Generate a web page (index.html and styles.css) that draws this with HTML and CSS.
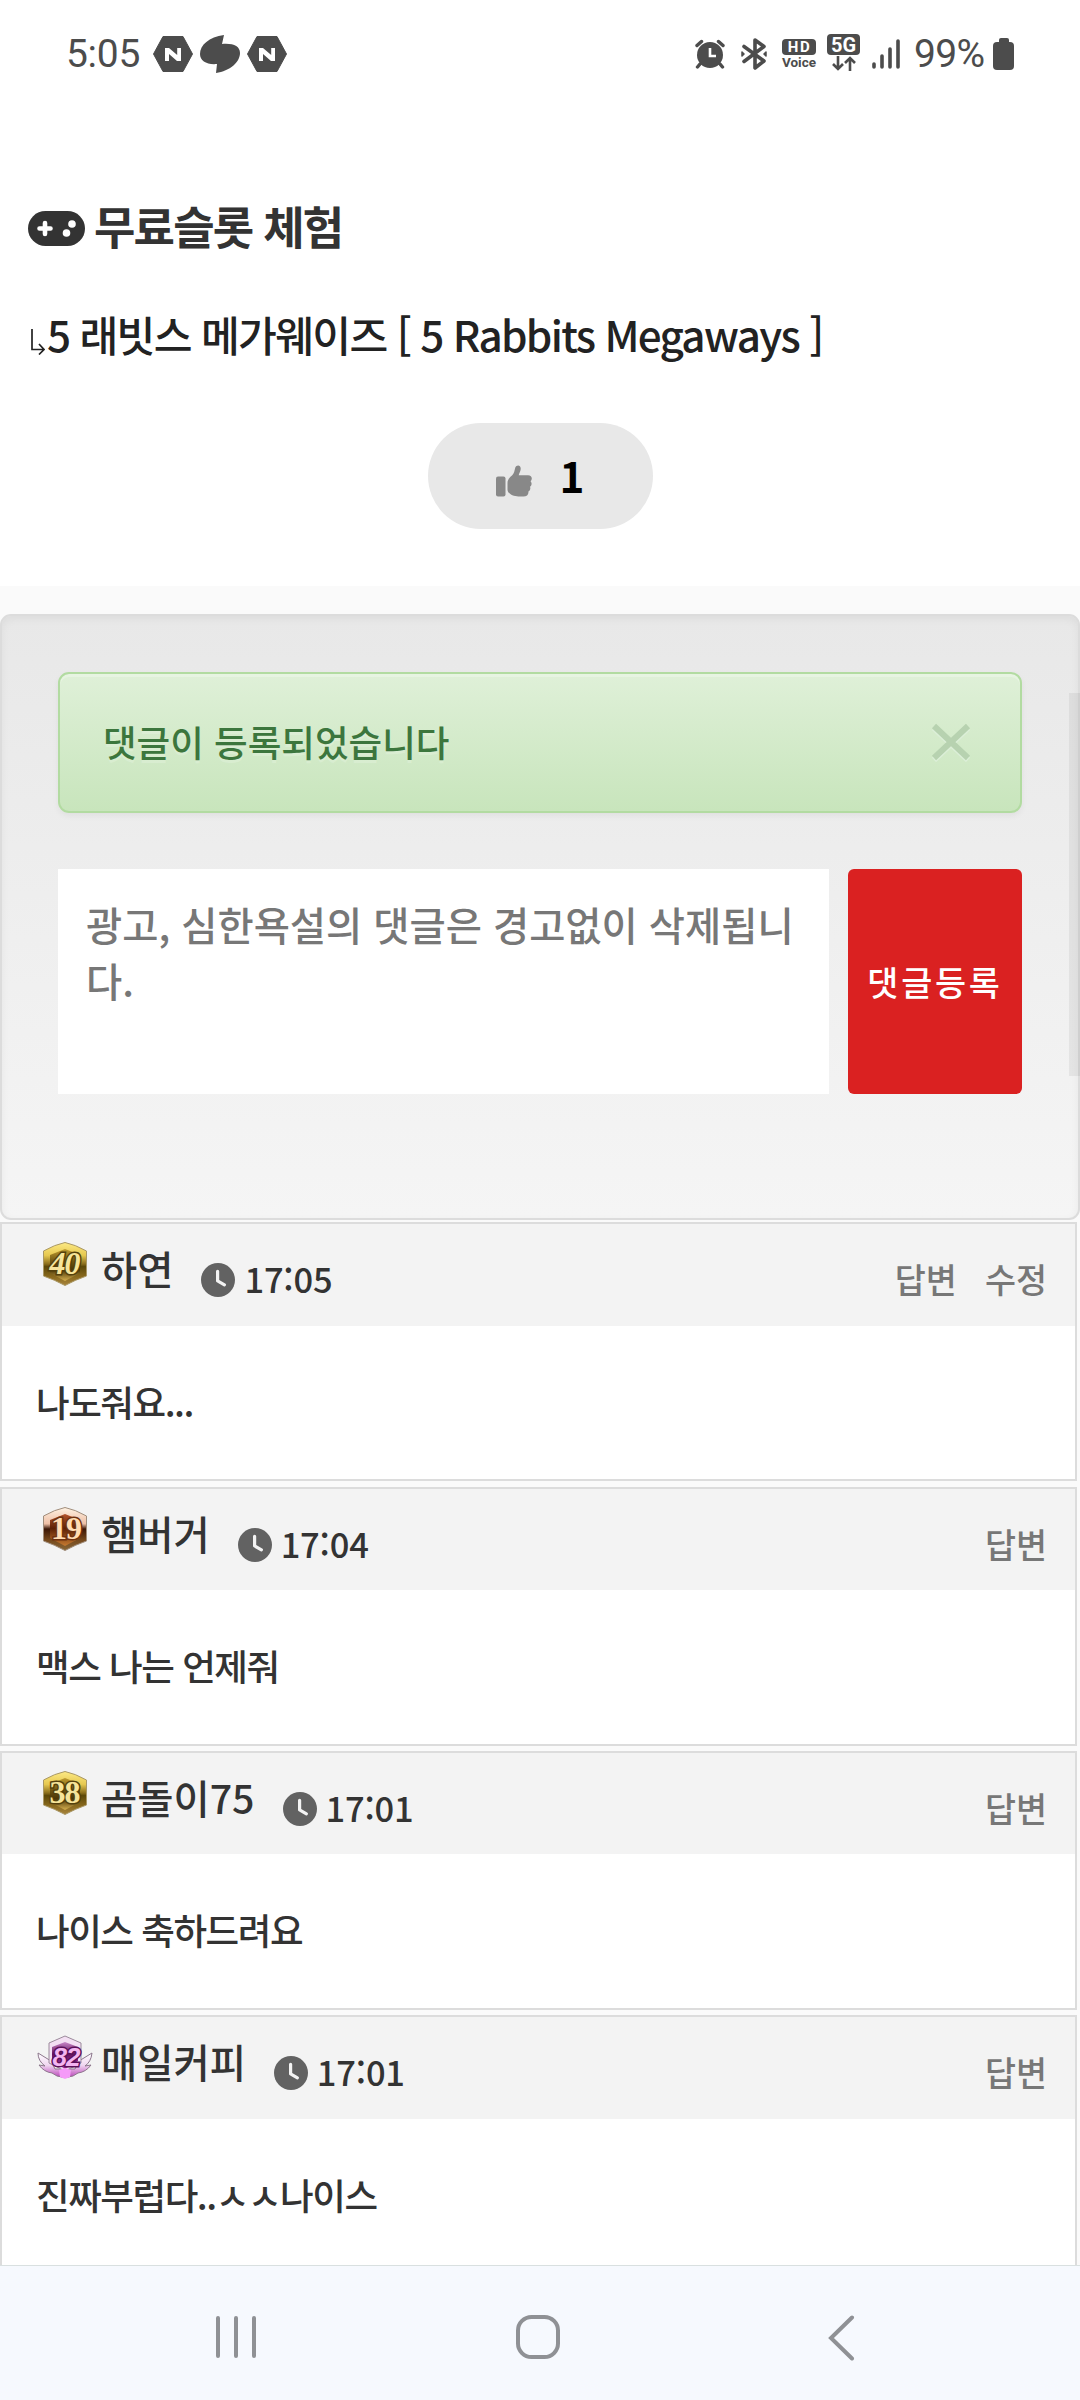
FILE: index.html
```html
<!DOCTYPE html>
<html lang="ko">
<head>
<meta charset="utf-8">
<title>무료슬롯 체험</title>
<link rel="stylesheet" href="styles.css">
</head>
<body>
<svg class="defs" aria-hidden="true">
  <defs>
    <linearGradient id="gold" x1="0" y1="0" x2="0" y2="1">
      <stop offset="0" stop-color="#fdea85"/><stop offset=".3" stop-color="#e6c850"/>
      <stop offset=".5" stop-color="#8a6d1c"/><stop offset=".56" stop-color="#5c4808"/><stop offset=".8" stop-color="#8a6a1e"/><stop offset="1" stop-color="#a8843c"/>
    </linearGradient>
    <linearGradient id="goldIn" x1="0" y1="0" x2="0" y2="1">
      <stop offset="0" stop-color="#c09c30"/><stop offset=".4" stop-color="#6b5310"/><stop offset=".65" stop-color="#4a3606"/><stop offset="1" stop-color="#d6b04f"/>
    </linearGradient>
    <linearGradient id="bronze" x1="0" y1="0" x2="0" y2="1">
      <stop offset="0" stop-color="#fff2e2"/><stop offset=".38" stop-color="#eebfa6"/>
      <stop offset=".5" stop-color="#3a1606"/><stop offset=".75" stop-color="#75481c"/><stop offset="1" stop-color="#8a6838"/>
    </linearGradient>
    <linearGradient id="bronzeIn" x1="0" y1="0" x2="0" y2="1">
      <stop offset="0" stop-color="#b5532a"/><stop offset=".45" stop-color="#5c2005"/><stop offset="1" stop-color="#c67a30"/>
    </linearGradient>
    <linearGradient id="violet" x1="0" y1="0" x2="0" y2="1">
      <stop offset="0" stop-color="#c886c8"/><stop offset=".45" stop-color="#65125f"/><stop offset="1" stop-color="#b63cb4"/>
    </linearGradient>
    <linearGradient id="wing" x1="0" y1="0" x2="0" y2="1">
      <stop offset="0" stop-color="#ffffff"/><stop offset=".5" stop-color="#f0d6f0"/><stop offset="1" stop-color="#b944b8"/>
    </linearGradient>
    <symbol id="clock" viewBox="0 0 34 34">
      <circle cx="17" cy="17" r="17" fill="#626262"/>
      <path d="M16.600 8.300v9.600l6.800 3.900" fill="none" stroke="#f3f3f3" stroke-width="3.200" stroke-linecap="round" stroke-linejoin="round"/>
    </symbol>
    <symbol id="hex" viewBox="0 0 40 36">
      <path d="M10 .5h20L39.500 18 30 35.500H10L.5 18z" fill="#4c4c4c" stroke="#4c4c4c" stroke-linejoin="round"/>
      <path d="M12 25V12h4l8.200 7V12H28v13h-4l-8-7v7z" fill="#fff"/>
    </symbol>
  </defs>
</svg>

<div class="screen">
  <header class="status">
    <span class="status-time">5:05</span>
    <svg class="notif" viewBox="0 0 40 36"><use href="#hex"/></svg>
    <svg class="notif notif-swirl" viewBox="0 0 40 38"><path d="M24 0C9 2 0 10 0 19c0 7 7 11 17 10l-1 9C30 36 40 27 40 18c0-7-7-10-18-9z" fill="#4c4c4c"/></svg>
    <svg class="notif" viewBox="0 0 40 36"><use href="#hex"/></svg>
    <div class="status-right">
      <svg width="30" height="30" viewBox="0 0 30 30" fill="none" stroke="#4c4c4c">
        <circle cx="15" cy="16" r="13" fill="#4c4c4c" stroke="none"/>
        <path d="M2 6.500l4.500-4M28 6.500l-4.500-4M5 25l-2.500 3M25 25l2.500 3" stroke-width="3.400" stroke-linecap="round"/>
        <path d="M15 9v8h6" stroke="#fff" stroke-width="2.600"/>
      </svg>
      <svg class="bt" width="28" height="32" viewBox="0 0 28 32" fill="none" stroke="#4c4c4c" stroke-width="3.600" stroke-linecap="round" stroke-linejoin="round">
        <path d="M4 8.500l20 14.500-9 7V2l9 6.500L4 23.500"/><path d="M2 14l2 2-2 2zM26 14l-2 2 2 2z" stroke-width="1.500" fill="#4c4c4c"/>
      </svg>
      <div class="hd"><span class="hd-tag">HD</span><span class="hd-voice">Voice</span></div>
      <div class="fiveg"><span class="fiveg-tag">5G</span>
        <svg width="24" height="15" viewBox="0 0 24 15" fill="none" stroke="#4c4c4c" stroke-width="2.600"><path d="M6 0v13M1 8l5 5 5-5M18 15V2M13 7l5-5 5 5"/></svg>
      </div>
      <svg class="signal" width="28" height="30" viewBox="0 0 28 30" stroke="#4c4c4c" stroke-width="3.600" stroke-linecap="round"><path d="M2 25v3M10 17v11M18 10v18M26 2v26"/></svg>
      <span class="percent">99%</span>
      <svg class="battery" width="21" height="32" viewBox="0 0 21 32" fill="#4c4c4c"><rect x="6" width="10" height="8" rx="2"/><rect y="4" width="21" height="28" rx="4"/></svg>
    </div>
  </header>

  <main class="content">
    <section class="post">
      <h1 class="title">
        <svg width="57" height="35" viewBox="0 0 57 35"><rect width="57" height="35" rx="17.500" fill="#333"/><path d="M17 12v11M11.500 17.500h11" stroke="#fff" stroke-width="4.600" stroke-linecap="round"/><circle cx="44" cy="13" r="3.800" fill="#fff"/><circle cx="38.500" cy="22" r="3.800" fill="#fff"/></svg>
        <span>무료슬롯 체험</span>
      </h1>
      <p class="subtitle"><svg width="15" height="28" viewBox="0 0 15 28" fill="none" stroke="#222" stroke-width="1.700"><path d="M2 2v20.500h12M9 17l5 5.500-5 5"/></svg><span>5 래빗스 메가웨이즈 [ 5 Rabbits Megaways ]</span></p>
      <button class="like" type="button">
        <svg width="36" height="32" viewBox="0 0 36 32" fill="#888"><rect y="11.500" width="9.500" height="20" rx="2"/><path d="M11.500 18c0-3 2-5.500 4.500-7.500 2.300-2 2.400-5 3.300-8C20.200-.3 25-.6 24.700 4c-.1 2.600-1.600 4.200-2 6.300H32c4 0 4.800 4 2.600 6 1.600 1.600 1.200 4.200-.6 5.400.9 2-.1 4-1.600 4.800.4 3.300-1.600 5-5 5h-5c-4.500 0-10.900-2.500-10.900-7z"/></svg>
        <span>1</span>
      </button>
    </section>

    <section class="panel">
      <div class="alert"><span>댓글이 등록되었습니다</span>
        <svg class="close" width="40" height="40" viewBox="0 0 40 40" fill="none" stroke-width="6"><path d="M3 6l34 32M37 6L3 38" stroke="#dcefd8"/><path d="M3 4l34 32M37 4L3 36" stroke="#b7d2b0"/></svg>
      </div>
      <form class="write">
        <textarea class="field" placeholder="광고, 심한욕설의 댓글은 경고없이 삭제됩니다."></textarea>
        <button class="submit" type="button">댓글등록</button>
      </form>
    </section>

    <section class="comments">
      <article class="comment">
        <div class="head">
          <svg class="badge" viewBox="0 0 56 44"><path d="M28 .5Q38 2.500 49.500 9v25Q38 38 28 43.500 18 38 6.500 34V9Q18 2.500 28 .5z" fill="url(#gold)" stroke="#a99867"/><path d="M28 7l15 6v18l-15 8-15-8V13z" fill="url(#goldIn)"/><text class="rank rank-gold" x="27.500" y="32">40</text></svg>
          <span class="name">하연</span><svg class="clock"><use href="#clock"/></svg><span class="time">17:05</span>
          <span class="actions"><span>답변</span><span>수정</span></span>
        </div>
        <p class="text">나도줘요...</p>
      </article>
      <article class="comment">
        <div class="head">
          <svg class="badge" viewBox="0 0 56 44"><path d="M28 .5Q38 2.500 49.500 9v25Q38 38 28 43.500 18 38 6.500 34V9Q18 2.500 28 .5z" fill="url(#bronze)" stroke="#a08d7c"/><path d="M28 7l15 6v18l-15 8-15-8V13z" fill="url(#bronzeIn)"/><text class="rank rank-bronze" x="29" y="32">19</text></svg>
          <span class="name">햄버거</span><svg class="clock"><use href="#clock"/></svg><span class="time">17:04</span>
          <span class="actions"><span>답변</span></span>
        </div>
        <p class="text">맥스 나는 언제줘</p>
      </article>
      <article class="comment">
        <div class="head">
          <svg class="badge" viewBox="0 0 56 44"><path d="M28 .5Q38 2.500 49.500 9v25Q38 38 28 43.500 18 38 6.500 34V9Q18 2.500 28 .5z" fill="url(#gold)" stroke="#a99867"/><path d="M28 7l15 6v18l-15 8-15-8V13z" fill="url(#goldIn)"/><text class="rank rank-gold rank-upright" x="27.500" y="32">38</text></svg>
          <span class="name">곰돌이75</span><svg class="clock"><use href="#clock"/></svg><span class="time">17:01</span>
          <span class="actions"><span>답변</span></span>
        </div>
        <p class="text">나이스 축하드려요</p>
      </article>
      <article class="comment">
        <div class="head">
          <svg class="badge" viewBox="0 0 56 44"><path d="M1 18l13 8 4 8h20l4-8 13-8q-1 9-7 13l6-1q-5 7-13 8l-5 3q-8 3-16 0l-5-3Q7 37 2 30l6 1Q1 26 1 18z" fill="url(#wing)" stroke="#8d778d"/><path d="M28 1l16 7v20L28 36 12 28V8z" fill="#f3dff3" stroke="#9b8a9b"/><path d="M28 7l13 5v14l-13 8-13-8V12z" fill="url(#violet)"/><text class="rank rank-violet" x="29" y="31">82</text><path d="M28 33l6 2-1 7-5 2-5-2-1-7z" fill="#f59af8"/></svg>
          <span class="name">매일커피</span><svg class="clock"><use href="#clock"/></svg><span class="time">17:01</span>
          <span class="actions"><span>답변</span></span>
        </div>
        <p class="text">진짜부럽다..ㅅㅅ나이스</p>
      </article>
    </section>
    <div class="scrollbar"></div>
  </main>

  <nav class="navbar">
    <svg width="40" height="44" viewBox="0 0 40 44" stroke="#8f9195" stroke-width="4" stroke-linecap="round"><path d="M2 3v38M20 3v38M38 3v38"/></svg>
    <svg class="home" width="44" height="44" viewBox="0 0 44 44" fill="none" stroke="#8f9195" stroke-width="4"><rect x="2" y="2" width="40" height="40" rx="13.500"/></svg>
    <svg width="28" height="46" viewBox="0 0 28 46" fill="none" stroke="#8f9195" stroke-width="4" stroke-linecap="round"><path d="M24 2.500L3 23l21 20.500"/></svg>
  </nav>
</div>
</body>
</html>
```
FILE: styles.css
```css
* { box-sizing: border-box; }

body {
  margin: 0;
  background: #fff;
  color: #333;
  font-family: "Noto Sans CJK KR", sans-serif;
  font-weight: 500;
}

h1, p { margin: 0; }
svg { display: block; flex: none; }
.defs { position: absolute; width: 0; height: 0; }

.screen {
  display: flex;
  flex-direction: column;
  width: 1080px;
  height: 2400px;
  overflow: hidden;
}

/* Status bar */
.status {
  display: flex;
  align-items: center;
  height: 108px;
  padding: 0 66px 0 66px;
  color: #4c4c4c;
  font-family: Roboto, sans-serif;
  font-weight: 400;
}
.status-time { width: 87px; font-size: 39px; line-height: 46px; letter-spacing: -0.3px; }
.notif { width: 40px; height: 36px; margin-right: 7px; }
.notif-swirl { height: 38px; }
.status-right { display: flex; align-items: center; margin-left: auto; }
.bt { margin-left: 15px; }
.hd { display: flex; flex-direction: column; align-items: center; width: 34px; margin-left: 14px; }
.hd-tag {
  width: 34px; height: 16px; border-radius: 4px; background: #4c4c4c; color: #fff;
  font-size: 15px; font-weight: 700; line-height: 17px; text-align: center; letter-spacing: 1.5px; text-indent: 1px;
}
.hd-voice { font-size: 13.5px; font-weight: 700; line-height: 14px; }
.fiveg { display: flex; flex-direction: column; align-items: center; gap: 1px; margin: -3px 0 0 11px; }
.fiveg-tag {
  width: 33px; height: 21px; border-radius: 4px; background: #4c4c4c; color: #fff;
  font-size: 20px; font-weight: 700; line-height: 22px; text-align: center;
}
.signal { margin-left: 12px; }
.percent { width: 79px; margin-left: 14px; font-size: 39px; line-height: 46px; letter-spacing: -0.7px; }

/* Post */
.content { position: relative; flex: 1; min-height: 0; overflow: hidden; background: #fafafa; }
.post { height: 478px; padding: 84px 28px 0; background: #fff; }
.title {
  display: flex;
  align-items: center;
  gap: 9px;
  height: 68px;
  font-size: 45px;
  font-weight: 700;
  line-height: 68px;
  letter-spacing: -0.04em;
}
.title svg { margin-top: 4px; }
.subtitle {
  display: flex;
  align-items: center;
  gap: 2px;
  height: 60px;
  margin-top: 44px;
  padding-left: 2px;
  color: #222;
  font-size: 42.190px;
  line-height: 60px;
  letter-spacing: -0.04em;
}
.subtitle svg { margin-top: 14px; }
.like {
  display: flex;
  align-items: center;
  justify-content: center;
  gap: 28px;
  width: 225px;
  height: 106px;
  margin: 59px auto 0;
  padding: 0;
  border: 0;
  border-radius: 53px;
  background: #e8e8e8;
  color: #000;
  font: 700 42.190px/60px "Noto Sans CJK KR", sans-serif;
}
.like svg { margin-top: 9px; }
.like span { margin-top: -3px; }

/* Comment form */
.panel {
  height: 606px;
  margin-top: 28px;
  padding: 56px;
  border: 2px solid #dcdcdc;
  border-radius: 11px;
  background: linear-gradient(#e8e8e8, #f5f5f5);
  box-shadow: inset 0 3px 8px rgba(0, 0, 0, .05);
}
.alert {
  display: flex;
  align-items: center;
  justify-content: space-between;
  height: 141px;
  padding: 0 49px 2px 43px;
  border: 2px solid #b2dba1;
  border-radius: 11px;
  background: linear-gradient(#dff0d8, #c8e5bc);
  box-shadow: inset 0 3px 0 rgba(255, 255, 255, .25), 0 3px 6px rgba(0, 0, 0, .05);
  color: #3c763d;
  font-size: 36.560px;
  line-height: 52px;
  text-shadow: 0 3px 0 rgba(255, 255, 255, .2);
}
.write { display: flex; gap: 19px; height: 225px; margin: 56px 0 0; }
.field {
  width: 771px;
  padding: 27px 28px;
  border: 0;
  outline: 0;
  resize: none;
  background: #fff;
  font: 500 39.375px/56.250px "Noto Sans CJK KR", sans-serif;
  word-break: break-all;
}
.field::placeholder { color: #777; }
.submit {
  width: 174px;
  padding: 0;
  border: 0;
  border-radius: 6px;
  background: #da2121;
  color: #fff;
  font: 500 33.750px/48px "Noto Sans CJK KR", sans-serif;
  letter-spacing: 2.810px;
}

/* Comment list */
.comments { display: flex; flex-direction: column; gap: 5.200px; width: 1077px; margin-top: 2.400px; }
.comment { height: 259px; border: 2px solid #dcdcdc; background: #fff; }
.head { display: flex; height: 101.600px; padding: 0 28px 0 35px; background: #f3f3f3; }
.badge { width: 56px; height: 44px; margin-top: 18px; }
.name { margin: 16px 28px 0 8px; font-size: 39.375px; line-height: 56px; }
.clock { width: 34px; height: 34px; margin-top: 39px; }
.time { margin: 28px 0 0 9px; font-size: 34.500px; line-height: 52px; letter-spacing: -0.2px; }
.actions { display: flex; gap: 28px; margin: 31px 0 0 auto; color: #777; font-size: 33.750px; line-height: 48px; }
.text { padding-left: 34px; font-size: 36.560px; line-height: 151px; letter-spacing: -0.04em; }
.rank { font: italic 700 32px "Liberation Serif", serif; text-anchor: middle; paint-order: stroke; stroke-width: 3px; letter-spacing: -1px; }
.rank-gold { fill: #f6e49a; stroke: #54400c; }
.rank-upright { font-style: normal; }
.rank-bronze { fill: #ffdcb4; stroke: #6e3210; font-style: normal; }
.rank-violet { fill: #f3b4f0; stroke: #5b1059; font-family: "Liberation Sans", sans-serif; font-size: 26px; }

.scrollbar { position: absolute; top: 585px; right: 0; width: 11px; height: 383px; background: rgba(0, 0, 0, .055); }

/* System navigation */
.navbar {
  display: flex;
  align-items: flex-start;
  height: 135px;
  padding: 49px 224px 0 216px;
  border-top: 1px solid #d9e0e0;
  background: #f6f9fe;
}
.home { margin: 0 auto 0 260px; }
```
